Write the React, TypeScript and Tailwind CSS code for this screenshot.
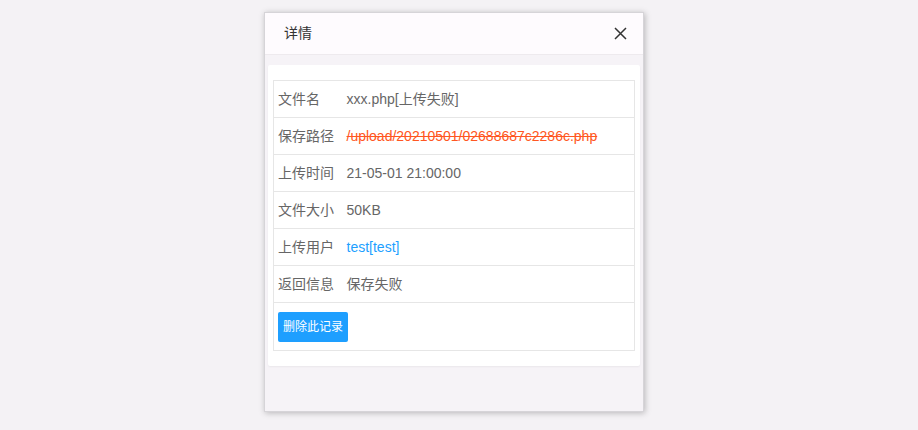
import React from "react"

const rows = [
  { label: "文件名", value: "xxx.php[上传失败]", kind: "text" },
  { label: "保存路径", value: "/upload/20210501/02688687c2286c.php", kind: "del" },
  { label: "上传时间", value: "21-05-01 21:00:00", kind: "text" },
  { label: "文件大小", value: "50KB", kind: "text" },
  { label: "上传用户", value: "test[test]", kind: "link" },
  { label: "返回信息", value: "保存失败", kind: "text" },
]

export default function App() {
  return (
    <div
      className="w-[918px] h-[430px] bg-[#f4f2f5] pt-[12px] pl-[264px]"
      style={{ fontFamily: '"Liberation Sans", Arial, "Noto Sans CJK SC", sans-serif' }}
    >
      <div className="w-[380px] h-[400px] border border-[#d6d4d8] bg-[#f6f3f7] shadow-[1px_1px_6px_rgba(0,0,0,0.25)] flex flex-col">
        {/* header */}
        <div className="h-[42px] bg-[#fefbfe] border-b border-[#eeeaee] flex items-center justify-between pl-[19px] pr-[16px]">
          <span className="text-[14px] text-[#333]">详情</span>
          <svg width="13" height="13" viewBox="0 0 13 13" className="text-[#333]">
            <path d="M1 1L12 12M12 1L1 12" stroke="currentColor" strokeWidth="1.5" />
          </svg>
        </div>

        {/* body */}
        <div className="px-[3px] pt-[10px]">
          <div className="bg-white rounded-[2px] shadow-[0_1px_2px_rgba(0,0,0,0.05)] px-[5px] pt-[15px] pb-[15px]">
            <table className="w-full border-collapse border border-[#e6e6e6] text-[14px]">
              <tbody>
                {rows.map((r) => (
                  <tr key={r.label} className="h-[37px] border-b border-[#e6e6e6]">
                    <td className="w-[73px] pl-[4px] text-[#666] whitespace-nowrap">{r.label}</td>
                    <td className="text-[#666]">
                      {r.kind === "del" && (
                        <span className="text-[#ff5722] line-through">{r.value}</span>
                      )}
                      {r.kind === "link" && <span className="text-[#1e9fff]">{r.value}</span>}
                      {r.kind === "text" && r.value}
                    </td>
                  </tr>
                ))}
                <tr className="h-[48px]">
                  <td colSpan={2} className="pl-[4px]">
                    <button className="h-[30px] w-[70px] bg-[#1e9fff] text-white text-[12px] rounded-[2px]">
                      删除此记录
                    </button>
                  </td>
                </tr>
              </tbody>
            </table>
          </div>
        </div>
      </div>
    </div>
  )
}
